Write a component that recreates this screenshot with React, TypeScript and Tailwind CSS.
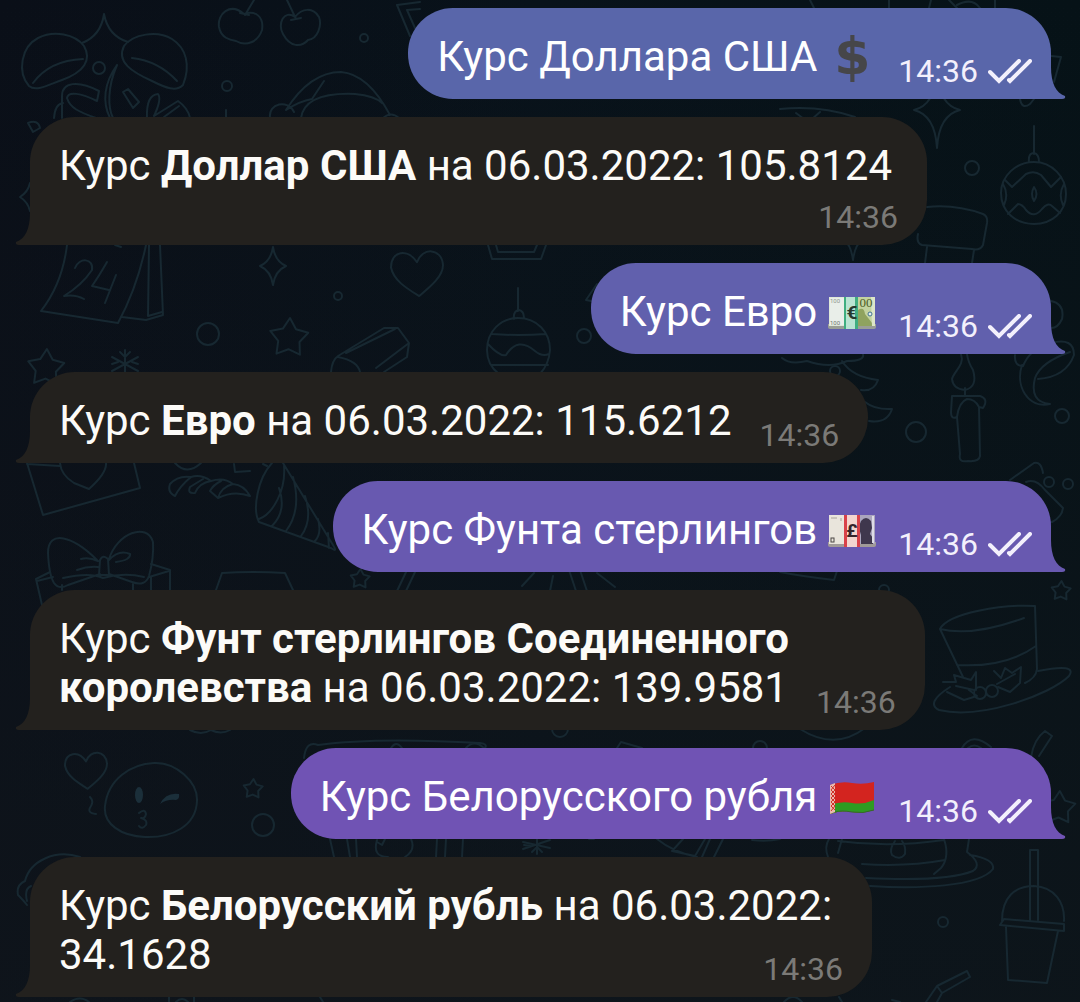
import type { ReactNode } from "react";

const circles: [number, number, number][] = [
  [99, 68, 6], [364, 38, 4], [227, 86, 5], [972, 168, 7], [338, 296, 4], [208, 334, 11],
  [584, 336, 7], [916, 432, 10], [1062, 416, 7], [835, 371, 5], [1049, 482, 5], [1068, 484, 5],
  [884, 590, 5], [263, 825, 11], [560, 729, 8], [760, 748, 7], [943, 922, 5], [81, 697, 5],
];

const stars: [number, number, number][] = [
  [289, 338, 20], [46, 368, 19], [1061, 591, 10], [253, 789, 10], [360, 579, 10], [1059, 808, 17],
];

const sparkles: [number, number, number, number][] = [
  [273, 266, 13, 19], [937, 110, 23, 38], [30, 197, 10, 14], [853, 240, 9, 20],
];

const hearts: [number, number, number][] = [
  [417, 274, 26], [86, 771, 21],
];

const doodles = [
  // Mistletoe
  "M104 14 C102 28 95 38 82 43 M104 14 C107 30 115 38 128 42",
  "M84 46 C92 60 84 72 62 80 C48 85 36 92 29 86 C17 72 21 47 38 38 C54 30 75 34 84 46 Z M33 83 C44 68 60 60 83 59",
  "M124 46 C116 62 132 72 152 81 C166 88 176 92 183 85 C191 65 186 48 172 39 C157 30 133 34 124 46 Z M132 58 C150 60 165 68 177 81",
  // Cherries
  "M244 14 C230 2 217 14 219 27 C221 38 230 40 236 41 C246 47 258 42 262 30 C264 17 256 10 244 14 Z M254 0 L245 15 M240 13 L249 15",
  "M295 17 C284 9 277 24 283 34 C290 47 301 48 308 40 C318 39 322 25 319 17 C313 7 302 8 295 17 Z M287 0 L296 19 M291 20 L301 18",
  // Jingle ornaments behind the first reply
  "M62 118 V96 C62 82 78 80 99 91 L97 101 C81 93 68 91 67 98 C70 108 79 112 96 118 M54 118 Q55 104 63 103 M117 65 C104 83 102 102 110 118 M117 65 C107 88 108 108 113 118",
  "M123 92 L128 89 L139 102 L133 108 Z M147 118 Q146 95 158 94 Q162 99 154 116 M154 116 L178 101 Q188 108 190 118 M164 117 L179 106 M28 123 L33 132 L40 128 Q38 119 28 123 Z",
  // Santa hat
  "M286 110 Q310 72 341 72 Q368 74 390 115 M301 118 Q305 92 355 94 Q375 96 382 103 M286 110 Q300 101 312 99 L324 81 M270 118 C268 103 288 99 294 112 M383 118 Q391 111 399 118 M226 110 V117",
  // Pennants
  "M410 36 L397 5 L420 2 M415 28 L407 10 L420 9 M810 0 L814 8 M889 8 V0 M929 8 L931 0 M949 0 L957 8 M957 5 Q972 -3 980 8 M995 0 V8",
  "M1051 56 L1061 57 L1054 82 M1020 99 Q1022 110 1030 104 L1034 99 M780 109 Q820 105 855 117 M796 113 L804 119 M820 112 L812 119",
  // Patterned bauble
  "M1034 126 V154 M1029 162 Q1028 153 1034 153 Q1039 154 1039 162 M1005 180 L1012 187 L1026 174 Q1034 170 1041 175 L1051 187 L1061 177 M1008 214 L1018 204 Q1022 204 1026 210 Q1034 219 1042 209 Q1048 202 1052 206 L1060 213",
  "M1034 162 C1052 162 1066 177 1066 194 C1066 212 1052 224 1034 224 C1015 224 1001 211 1001 193 C1001 176 1016 162 1034 162 Z M1034 187 Q1030 194 1034 201 Q1039 194 1034 187 Z M1003 184 Q1009 194 1004 205 M1064 184 Q1058 194 1063 205",
  // Lantern
  "M927 207 Q955 204 983 214 Q988 216 987 223 L983 245 Q980 251 972 249 L922 245 Q916 243 918 234 M927 247 L925 263 M974 250 L972 263",
  // Calendar
  "M67 245 C64 270 55 293 41 311 L118 323 Q137 288 146 245 M160 245 L163 315 L146 320 L122 317 M149 245 L148 316 L162 312 M115 245 L121 247",
  "M75 268 C79 257 94 258 92 270 Q82 285 64 296 Q75 294 84 299 M107 262 Q99 276 92 286 L109 290 M116 275 L105 303",
  // Snowflakes
  "M125 350 V374 M112 357 L138 371 M112 371 L138 357 M120 352 L125 357 L130 352 M112 364 L118 362 M138 364 L132 362",
  "M537 839 V854 M523 842 L550 848 M523 849 L550 840 M532 852 L537 847 L542 852 M524 845 L530 846",
  // Eraser
  "M331 372 Q332 360 338 356 L384 328 H398 L409 343 L407 357 L384 372 M338 357 Q358 361 360 372 M346 353 L395 329 M376 368 L409 343",
  // Framed picture and striped bauble
  "M488 245 L492 259 H541 L546 245 M496 245 L498 252 H534 L537 245",
  "M518 288 V311 M514 319 Q513 311 519 310 Q524 311 524 318 M499 374 Q487 365 487 350 C487 331 501 318 518 318 C537 318 550 332 550 350 Q549 364 540 374 M492 334 Q518 336 546 334 M488 344 Q500 357 506 355 Q518 336 535 351 Q542 357 549 354 M491 365 H548",
  "M586 300 L597 284 M586 300 L596 302",
  // Envelope
  "M27 463 L43 515 L140 488 L134 463 M27 464 L60 466 M60 463 Q61 475 74 483 L89 489 Q107 473 106 463",
  // Rope and fish
  "M175 496 Q167 492 170 484 Q178 475 191 477 Q180 486 175 496 M191 477 Q201 474 211 481 Q199 483 195 493 Q187 494 190 487 L203 479 M211 481 Q224 477 233 484 Q221 487 218 498 L210 491 Q213 485 221 481 M233 484 Q244 485 250 496 Q234 490 218 498 M175 463 Q187 476 201 463 M234 464 L235 472 L250 471 M263 464 L267 466",
  // Party cone
  "M283 463 L333 545 Q338 553 331 548 L259 522 M259 522 C252 509 258 478 272 463 M284 466 C286 490 273 514 259 519 M279 488 Q287 511 272 526 M293 477 Q302 510 286 531 M305 496 Q313 520 301 536 M318 519 Q322 534 315 541 M328 533 L329 548",
  // Gift
  "M97 560 C73 536 48 529 48 553 Q49 575 54 583 Q59 590 68 585 L100 574 M109 559 C117 533 147 522 153 542 Q154 558 149 576 Q145 587 132 582 L109 574 M100 560 Q103 554 108 559 L109 575 H99 Z M98 561 Q89 557 81 559 M98 567 Q88 566 77 570 M109 560 Q119 549 130 554 Q131 560 116 562 M63 578 Q90 572 103 578 Q124 572 144 577",
  "M50 572 L36 579 L42 605 M151 564 L170 570 V590 M37 581 L53 577 M149 577 L169 571 M62 585 V590 M133 584 V590 M151 577 V590 M216 590 L222 573 Q252 571 285 573 L293 590",
  // Candle
  "M961 354 C965 365 954 371 952 379 Q953 389 965 390 Q978 387 973 370 Q968 362 967 354 M965 388 V396 M957 417 Q951 420 951 412 L952 396 H980 Q989 399 983 408 L979 407 L980 456 Q979 462 968 461 Q958 463 960 454 L957 417 Q959 402 967 399 Q975 399 979 407",
  // Christmas tree
  "M782 358 Q790 365 807 361 Q830 369 847 361 Q865 361 863 354 M842 361 Q852 377 878 380 Q874 392 861 390 M865 402 Q875 410 892 409 Q887 424 869 421",
  // Candy cane
  "M1051 301 Q1065 304 1062 319 Q1058 328 1051 328 M1051 343 Q1074 337 1074 355 Q1066 377 1038 379 M1015 355 Q1014 366 1023 366 Q1030 350 1040 350 M1022 365 C1015 386 1028 409 1050 404 Q1029 402 1035 378 Q1041 362 1070 352",
  "M1010 480 L1034 463 Q1041 461 1043 473 M1026 482 Q1036 478 1045 490 L1063 508 Q1062 517 1052 522",
  // Fireworks
  "M407 570 L397 591 M416 570 L406 591 M534 573 L522 586 M553 576 L550 591 M569 570 L576 591 M580 570 L587 591 M597 573 L615 587 M780 572 Q800 576 834 580 L837 571",
  // Top hat
  "M940 629 C948 613 1003 604 1035 606 L1037 669 Q1036 678 1025 683 M940 629 L963 677 M940 629 Q972 637 1024 618 M957 665 Q1005 668 1036 646",
  "M1038 671 Q1078 663 1069 676 C1050 695 980 720 939 710 Q925 703 950 687 M943 682 L956 682 L954 675 L971 680 L976 672 L976 690 M947 692 L964 700 L977 696 L969 690 M956 686 L974 690 M994 671 L1001 678 L1005 668 L1012 673 L1021 667 L1020 683 L1010 692 L998 687 M997 684 L1015 674",
  "M980 687 A6 6 0 1 0 980 699 A6 6 0 1 0 980 687 M992 685 A6 6 0 1 0 992 697 A6 6 0 1 0 992 685",
  // Kissing face
  "M154 763 C176 762 198 782 197 801 C196 826 172 838 145 837 C121 836 103 824 105 806 C108 779 131 764 154 763 Z M139 813 Q145 808 146 814 Q145 819 141 818 Q148 820 146 825 Q142 830 139 826 M90 797 Q94 801 91 806 Q86 813 96 814",
  // Clouds and cups between rows
  "M190 730 Q201 736 211 730 Q221 735 230 730 M304 758 Q306 740 318 745 Q375 737 480 743 Q488 744 485 748 M391 748 Q396 740 402 748 M466 748 Q474 739 484 748 M800 729 Q835 751 865 728 M962 748 Q972 731 991 747 M968 748 Q974 743 981 748 M1031 757 Q1034 739 1045 731 L1052 736 L1039 756",
  "M330 839 L334 857 M347 839 L350 857 M356 839 L357 857 M377 840 Q372 857 388 857 M377 842 L382 845 L385 839 M411 839 Q416 850 405 857 M437 839 L436 857 M446 839 L445 857 M463 839 L462 857 M617 748 L621 742 L642 748 M589 839 H594",
  "M657 839 Q673 852 697 857 M683 839 L672 851 L695 856 L705 839 M710 839 L702 857 M723 839 L714 857 M752 840 Q767 842 780 839",
  // Baubles at the lower left
  "M80 857 C55 849 30 861 25 881 Q16 885 18 895 Q24 901 27 905 M27 901 Q24 889 31 886 M70 1002 Q80 995 89 1002 M169 997 V1002 M194 997 V1002 M176 1002 Q182 996 188 1002 M320 997 L323 1002",
  // Cake
  "M829 839 Q824 847 828 857 M842 839 L838 853 M838 841 Q890 848 944 840 M895 841 Q889 849 892 855 Q900 861 905 854 Q906 846 902 841 M944 839 Q950 857 941 868 L934 874 M969 839 L967 852 Q983 864 973 871 Q946 882 866 878 M970 855 Q995 859 993 869 C979 887 918 889 870 886 M862 864 Q907 867 945 860",
  // Takeaway cup
  "M1030 920 V850 H1038 V920 M1002 921 C1002 897 1015 886 1034 886 C1055 887 1065 903 1064 921 M1004 919 L1064 924 V931 L1000 925 Z M1006 927 L1008 980 L1047 983 L1058 931",
  // Match
  "M926 1002 L937 986 L967 971 L970 977 L942 993 L937 1002 M937 986 L942 993 M892 1000 L900 1002 M784 1002 Q793 992 802 1002 M839 997 L842 1002",
];

function starPath(cx: number, cy: number, r: number) {
  const points = Array.from({ length: 10 }, (_, i) => {
    const radius = i % 2 ? r * 0.56 : r;
    const a = (Math.PI * i) / 5 - Math.PI / 2 + 0.05;
    return `${(cx + radius * Math.cos(a)).toFixed(1)} ${(cy + radius * Math.sin(a)).toFixed(1)}`;
  });
  return `M${points.join(" L")} Z`;
}

function Wallpaper() {
  return (
    <svg
      className="absolute inset-0 h-full w-full"
      viewBox="0 0 1080 1002"
      preserveAspectRatio="xMidYMin slice"
      fill="none"
      stroke="#172831"
      strokeWidth="2"
      strokeLinecap="round"
      strokeLinejoin="round"
      aria-hidden="true"
    >
      {doodles.map((d) => (
        <path key={d} d={d} />
      ))}
      {circles.map(([x, y, r]) => (
        <circle key={`${x}-${y}`} cx={x} cy={y} r={r} />
      ))}
      {stars.map(([x, y, r]) => (
        <path key={`${x}-${y}`} d={starPath(x, y, r)} />
      ))}
      {sparkles.map(([x, y, w, h]) => (
        <path
          key={`${x}-${y}`}
          d={`M${x} ${y - h} Q${x + 2} ${y - 5} ${x + w} ${y} Q${x + 2} ${y + 5} ${x} ${y + h} Q${x - 2} ${y + 5} ${x - w} ${y} Q${x - 2} ${y - 5} ${x} ${y - h} Z`}
        />
      ))}
      {hearts.map(([x, y, s]) => (
        <path
          key={`${x}-${y}`}
          d={`M${x} ${y - s * 0.45} C${x - s * 0.35} ${y - s} ${x - s} ${y - s * 0.9} ${x - s} ${y - s * 0.25} C${x - s * 0.9} ${y + s * 0.25} ${x - s * 0.4} ${y + s * 0.55} ${x + s * 0.08} ${y + s * 0.85} C${x + s * 0.5} ${y + s * 0.5} ${x + s} ${y + s * 0.1} ${x + s} ${y - s * 0.35} C${x + s * 0.95} ${y - s} ${x + s * 0.2} ${y - s * 1.05} ${x} ${y - s * 0.45} Z`}
        />
      ))}
      <ellipse cx="139" cy="795" rx="4" ry="8" fill="#1b2f3a" stroke="none" />
      <path d="M160 804 Q166 792 179 794 Q180 799 176 800 Q167 799 160 804 Z" fill="#1b2f3a" stroke="none" />
    </svg>
  );
}

function Checks() {
  return (
    <svg className="h-[26px] w-[44px] shrink-0" viewBox="0 0 44 26" fill="none" stroke="currentColor" strokeWidth="4" strokeLinecap="round" aria-label="Прочитано" role="img">
      <path d="M2 13 L11 22 L31 2" />
      <path d="M21 21 L22 22 L42 2" />
    </svg>
  );
}

function DollarIcon() {
  return (
    <span className="flex h-[49px] w-[50px] items-center justify-center font-['DejaVu_Sans'] text-[52px] font-bold text-[#464649]">
      $
    </span>
  );
}

function EuroIcon() {
  return (
    <svg className="w-[50px]" viewBox="0 0 50 34" aria-label="Банкнота евро" role="img">
      <path d="M1 29 H49 V32 Q49 34 47 34 H3 Q1 34 1 32 Z" fill="#9a9f96" />
      <rect x="2" y="2" width="46" height="29" fill="#dfe8d9" />
      <rect x="3" y="3" width="14" height="27" fill="#e9eee9" />
      <rect x="31" y="2" width="16" height="29" fill="#c3d3a0" />
      <path d="M31 15 Q37 11 38 19 L45 28 V31 H31 Z" fill="#8fa35f" />
      <path d="M44 2 H48 V31 H45 Z" fill="#dde6c8" />
      <circle cx="43" cy="19" r="2" fill="#e6eef0" stroke="#3f7390" />
      <rect x="17" y="2" width="14" height="32" fill="#3fae80" />
      <rect x="19" y="2" width="9" height="32" fill="#b9e4d2" />
      <text x="25" y="24" textAnchor="middle" className="font-['Roboto'] text-[19px] font-bold" fill="#26382f">€</text>
      <text x="39" y="12" textAnchor="middle" className="font-['Liberation_Serif'] text-[13px]" fill="#4d5c25">00</text>
      <text x="3" y="8" className="font-['Roboto'] text-[6px]" fill="#8e978f">100</text>
      <text x="3" y="30" className="font-['Roboto'] text-[6px]" fill="#6d786f">100</text>
    </svg>
  );
}

function PoundIcon() {
  return (
    <svg className="w-[50px]" viewBox="0 0 50 34" aria-label="Банкнота фунта" role="img">
      <path d="M1 29 H49 V32 Q49 34 47 34 H3 Q1 34 1 32 Z" fill="#a09a98" />
      <rect x="2" y="2" width="46" height="29" fill="#e9e5dc" />
      <rect x="33" y="2" width="15" height="29" fill="#aaa5bd" />
      <path d="M34 31 V22 Q31 14 34 8 Q39 2 44 8 L45 15 L43 21 L46 25 V31 Z" fill="#3f374d" />
      <path d="M46 3 V30" stroke="#dddce6" strokeWidth="2" />
      <rect x="17" y="2" width="16" height="32" fill="#d9424a" />
      <rect x="20" y="2" width="10" height="32" fill="#f3d5cf" />
      <text x="25" y="24" textAnchor="middle" className="font-['Roboto'] text-[19px] font-bold" fill="#35242b">£</text>
      <path d="M4 5 H10 M14 5 V8" stroke="#a9a49a" />
      <rect x="4" y="25" width="3" height="4" fill="none" stroke="#4b4744" />
    </svg>
  );
}

function BelarusIcon() {
  return (
    <svg className="w-[50px]" viewBox="0 0 50 34" aria-label="Флаг Беларуси" role="img">
      <path d="M3 5 Q14 1 25 3 Q36 5 47 2 V30 Q36 34 25 32 Q14 30 3 34 Z" fill="#d3241f" />
      <path d="M3 25 Q14 21 25 23 Q36 25 47 20 V30 Q36 34 25 32 Q14 30 3 34 Z" fill="#2f9b21" />
      <path d="M3 5 L8 3 V32 L3 34 Z" fill="#e9b9ad" />
      <path d="M4 6 L8 10 L4 14 L8 18 L4 22 L8 26 L4 31 M8 5 L4 10 L8 14 L4 18 L8 22 L4 26 L8 30" fill="none" stroke="#cf3029" />
      <path d="M8 32 Q14 30 25 32 Q36 34 47 30" fill="none" stroke="#336a2a" />
    </svg>
  );
}

function Time() {
  return <time className="block h-[37px] text-[32px] leading-[37px]">14:36</time>;
}

function Tail({ className }: { className: string }) {
  return (
    <svg className={`absolute bottom-0 h-[32px] w-[15px] ${className}`} viewBox="0 0 15 32" fill="currentColor" aria-hidden="true">
      <path d="M0 0 C0 16 5 26 14 29 Q15 32 11 32 H0 Z" />
    </svg>
  );
}

function Outgoing({ text, icon, color }: { text: string; icon: ReactNode; color: string }) {
  return (
    <li className={`relative mr-[29px] flex items-end self-end rounded-[45px] rounded-br-none pt-6 pr-[19px] pb-[18px] pl-[29px] ${color}`}>
      <Tail className="left-full" />
      <p className="flex items-center gap-2.5 leading-[49px] text-white">
        {text}
        {icon}
      </p>
      <div className="-mb-[9px] ml-[21px] flex items-center gap-[10px] text-[#f3f0fc]">
        <Time />
        <Checks />
      </div>
    </li>
  );
}

function Incoming({ className = "", lines, last }: { className?: string; lines?: ReactNode; last?: ReactNode }) {
  return (
    <li className={`relative ml-[30px] self-start rounded-[45px] rounded-bl-none bg-[#23211e] px-[29px] pt-6 pb-[18px] text-[#23211e] ${className}`}>
      <Tail className="right-full -scale-x-100" />
      {lines && <p className="leading-[49px] text-[#fcfbf8]">{lines}</p>}
      <div className="flex items-end justify-end gap-7 text-[#7b7a77]">
        {last && <p className="grow leading-[49px] text-[#fcfbf8]">{last}</p>}
        <div className={last ? "-mb-[9px]" : "-mb-[9px] pt-[9px]"}>
          <Time />
        </div>
      </div>
    </li>
  );
}

export default function App() {
  return (
    <main className="relative min-h-screen overflow-hidden bg-linear-to-r from-[#0a0f18] via-[#08121a] to-[#061217] font-['Roboto',sans-serif] text-[42px]">
      <div className="absolute inset-0 bg-linear-to-b from-transparent to-[#10161c]/70" />
      <Wallpaper />
      <ul className="relative flex flex-col gap-[18px] pt-2 pb-[5px]">
        <Outgoing text="Курс Доллара США" icon={<DollarIcon />} color="bg-[#5966aa] text-[#5966aa]" />
        <Incoming
          className="min-w-[897px]"
          lines={<>Курс <b className="font-bold">Доллар США</b> на 06.03.2022: 105.8124</>}
        />
        <Outgoing text="Курс Евро" icon={<EuroIcon />} color="bg-[#6160ad] text-[#6160ad]" />
        <Incoming last={<>Курс <b className="font-bold">Евро</b> на 06.03.2022: 115.6212</>} />
        <Outgoing text="Курс Фунта стерлингов" icon={<PoundIcon />} color="bg-[#6859b0] text-[#6859b0]" />
        <Incoming
          lines={<>Курс <b className="font-bold">Фунт стерлингов Соединенного</b></>}
          last={<><b className="font-bold">королевства</b> на 06.03.2022: 139.9581</>}
        />
        <Outgoing text="Курс Белорусского рубля" icon={<BelarusIcon />} color="bg-[#7053b4] text-[#7053b4]" />
        <Incoming
          className="min-w-[842px]"
          lines={<>Курс <b className="font-bold">Белорусский рубль</b> на 06.03.2022:</>}
          last="34.1628"
        />
      </ul>
    </main>
  );
}
